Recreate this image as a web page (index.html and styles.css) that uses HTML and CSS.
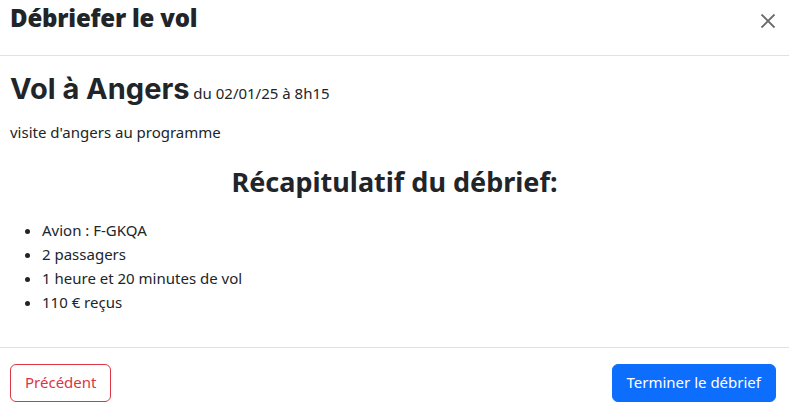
FILE: index.html
```html
<!DOCTYPE html>
<html lang="fr">
<head>
<meta charset="utf-8">
<link rel="stylesheet" href="styles.css">
</head>
<body>
<div class="modal">
  <header class="modal-header">
    <h5 class="modal-title">Débriefer le vol</h5>
    <button class="btn-close" aria-label="Fermer">
      <svg width="16" height="16" viewBox="0 0 16 16"><path d="M1.5 1.5 L14.5 14.5 M14.5 1.5 L1.5 14.5" stroke="#6c6c6c" stroke-width="1.8" fill="none"/></svg>
    </button>
  </header>
  <div class="modal-body">
    <h2 class="flight-title">Vol à Angers <small class="flight-date">du 02/01/25 à 8h15</small></h2>
    <p class="flight-desc">visite d'angers au programme</p>
    <h3 class="recap-title">Récapitulatif du débrief:</h3>
    <ul class="recap-list">
      <li>Avion : F-GKQA</li>
      <li>2 passagers</li>
      <li>1 heure et 20 minutes de vol</li>
      <li>110 € reçus</li>
    </ul>
  </div>
  <footer class="modal-footer">
    <button class="btn btn-outline-danger">Précédent</button>
    <button class="btn btn-primary">Terminer le débrief</button>
  </footer>
</div>
</body>
</html>
```
FILE: styles.css
```css
* { box-sizing: border-box; }
html, body { margin: 0; padding: 0; background: #fff; }
body {
  font-family: "Noto Sans", "Open Sans", sans-serif;
  font-size: 16px;
  line-height: 1.5;
  color: #212529;
}
.modal { width: 789px; }
.modal-header {
  display: flex;
  align-items: flex-start;
  justify-content: space-between;
  height: 56px;
  padding: 4px 9px 0 10px;
  border-bottom: 1px solid #dee2e6;
}
.modal-title {
  margin: 0;
  font-family: "Open Sans", "Inter", sans-serif;
  font-weight: 800;
  font-size: 24px;
  line-height: 1.2;
  letter-spacing: -0.2px;
}
.btn-close {
  border: 0;
  background: transparent;
  padding: 4px;
  display: flex;
  margin-top: 5px;
}
.modal-body { padding: 16px 10px 14px 10px; }
.flight-title {
  margin: 0 0 14px;
  font-family: "Inter", "Lato", sans-serif;
  font-weight: 700;
  font-size: 29px;
  line-height: 1.2;
}
.flight-date {
  font-family: "Noto Sans", sans-serif;
  font-weight: 400;
  font-size: 15px;
  margin-left: -3px;
}
.flight-desc { margin: 0 0 23px; font-size: 15px; }
.recap-title {
  margin: 0 0 19px;
  text-align: center;
  font-size: 27px;
  font-weight: 700;
  line-height: 1.2;
}
.recap-list {
  margin: 0 0 19px;
  padding-left: 32px;
  font-size: 15px;
  line-height: 24px;
}
.modal-footer {
  display: flex;
  justify-content: space-between;
  align-items: center;
  border-top: 1px solid #dee2e6;
  padding: 16px 13px 11px 10px;
}
.btn {
  font-family: "Noto Sans", sans-serif;
  font-size: 15px;
  height: 38px;
  padding: 0 14px;
  border-radius: 6px;
  border: 1px solid transparent;
  line-height: 1.5;
}
.btn-outline-danger { color: #dc3545; border-color: #dc3545; background: #fff; }
.btn-primary { color: #fff; background: #0d6efd; border-color: #0d6efd; }
```
